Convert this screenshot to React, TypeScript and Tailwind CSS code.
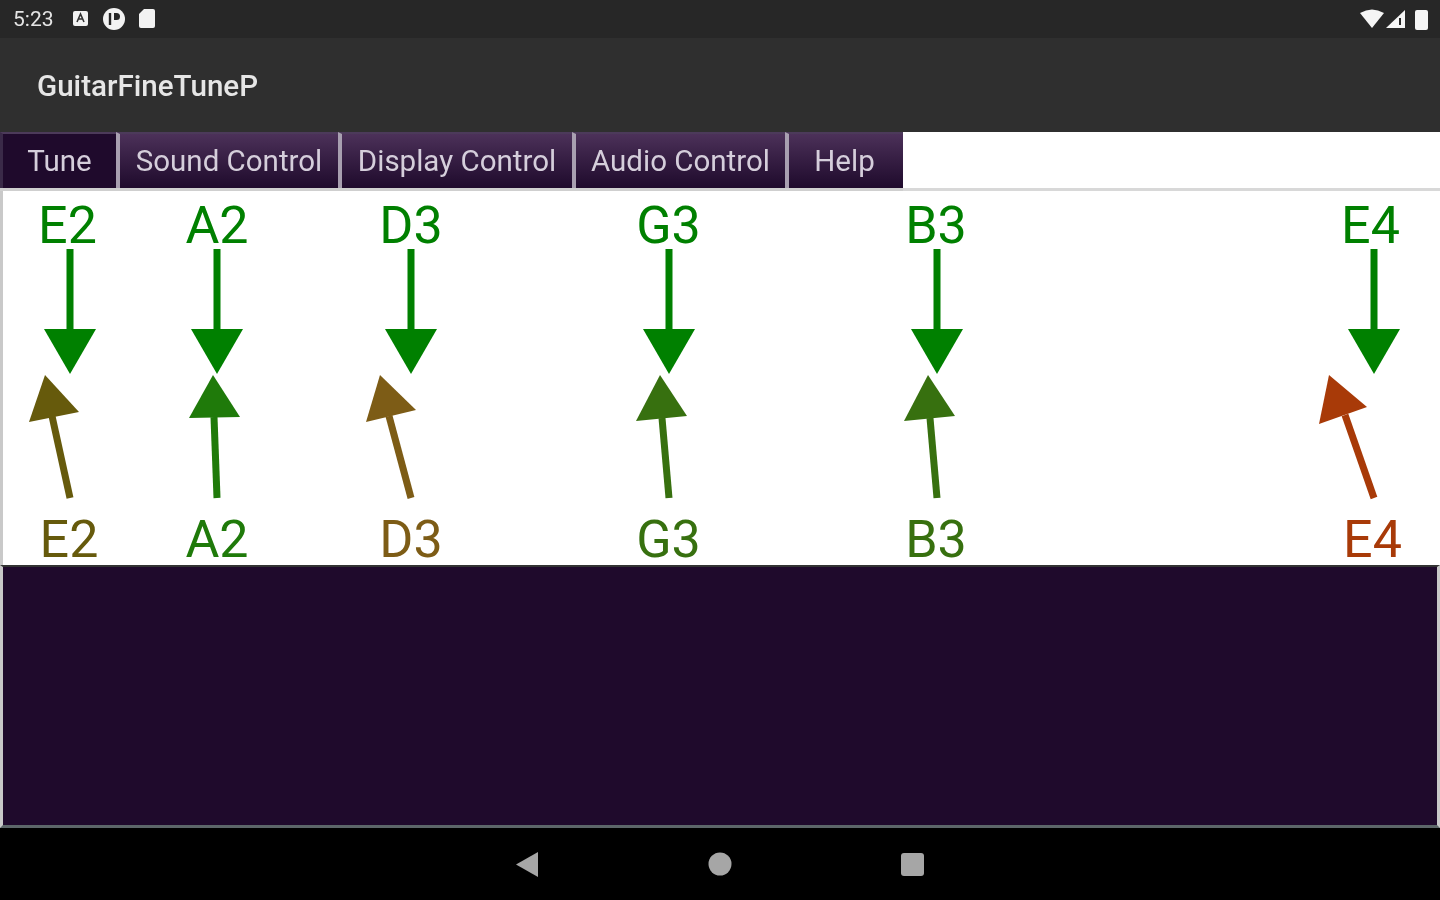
const roboto = "font-['Roboto',sans-serif]";

const tabs = [
  { label: "Tune", width: "w-[116px] border-l-[3px] border-l-[#3a2a48]", active: true },
  { label: "Sound Control", width: "w-[222px] border-l-[4px] border-l-[#a89fb0]", active: false },
  { label: "Display Control", width: "w-[234px] border-l-[4px] border-l-[#a89fb0]", active: false },
  { label: "Audio Control", width: "w-[213px] border-l-[4px] border-l-[#a89fb0]", active: false },
  { label: "Help", width: "w-[118px] border-l-[4px] border-l-[#a89fb0] pr-[3px]", active: false },
];

// x of each string on the tuner canvas, up arrow geometry read from the picture
const strings = [
  { top: "E2", bottom: "E2", x: 67.5, bottomX: 69, color: "#665a0c", tip: "45,375", left: "29,422", right: "79,412", foot: "70,498", neck: "52,416" },
  { top: "A2", bottom: "A2", x: 217, bottomX: 217, color: "#1f7a0a", tip: "213,375", left: "189,418", right: "240,417", foot: "217,498", neck: "214,417" },
  { top: "D3", bottom: "D3", x: 411, bottomX: 411, color: "#7d5c16", tip: "380,375", left: "366,422", right: "416,410", foot: "411,498", neck: "389,416" },
  { top: "G3", bottom: "G3", x: 668.5, bottomX: 668.5, color: "#37700f", tip: "660,375", left: "636,421", right: "687,416", foot: "669,498", neck: "662,418" },
  { top: "B3", bottom: "B3", x: 936, bottomX: 936, color: "#37700f", tip: "928,375", left: "904,421", right: "955,416", foot: "937,498", neck: "930,418" },
  { top: "E4", bottom: "E4", x: 1370.5, bottomX: 1372.5, color: "#a83a08", tip: "1329,375", left: "1319,424", right: "1367,407", foot: "1374,498", neck: "1345,415" },
];

const downX = [70, 217, 411, 669, 937, 1374];

function StatusBar() {
  return (
    <div className="flex h-[38px] shrink-0 items-center justify-between bg-[#272727] pl-[13px] pr-[11px]">
      <div className="flex items-center">
        <span className={`${roboto} w-[60px] pt-[2px] text-[21px] text-[#e4e4e4]`}>5:23</span>
        <svg width="90" height="24" viewBox="0 0 90 24">
          <rect x="0" y="4" width="15" height="15" rx="2" fill="#f2f2f2" />
          <path d="M4 15 L7.5 7 L11 15 M5.5 12 H9.5" stroke="#333" strokeWidth="1.6" fill="none" />
          <circle cx="41" cy="12" r="11" fill="#f2f2f2" />
          <path d="M37 6 V18" stroke="#262626" strokeWidth="2.4" />
          <path d="M41 6 H43.5 A3.5 3.5 0 0 1 43.5 13 H41 Z" fill="#262626" />
          <path d="M71 2 H80 A2 2 0 0 1 82 4 V19 A2 2 0 0 1 80 21 H68 A2 2 0 0 1 66 19 V7 Z" fill="#f2f2f2" />
        </svg>
      </div>
      <svg width="70" height="24" viewBox="0 0 70 24">
        <path d="M1 6 Q13 -1 25 6 L13 21 Z" fill="#f5f5f5" />
        <path d="M27 21 L46 3 V21 Z" fill="#f5f5f5" />
        <path d="M41 11 V18" stroke="#272727" strokeWidth="2" />
        <path d="M56 5 A2 2 0 0 1 58 3 H67 A2 2 0 0 1 69 5 V21 A2 2 0 0 1 67 23 H58 A2 2 0 0 1 56 21 Z" fill="#f5f5f5" />
      </svg>
    </div>
  );
}

function TabBar() {
  return (
    <div className="flex h-[59px] shrink-0 bg-white">
      <div className="flex h-full border-b-[3px] border-[#cfcfcf]">
        {tabs.map((tab) => (
          <div
            key={tab.label}
            className={`${roboto} ${tab.width} flex items-center justify-center border-t-[2px] border-t-[#4c3a5a] text-[29.5px] text-[#d5cedb] ${
              tab.active ? "bg-[#1f0a2c]" : "bg-gradient-to-b from-[#4c3159] to-[#1f0a2c]"
            }`}
          >
            {tab.label}
          </div>
        ))}
      </div>
      <div className="flex-1 border-b-[3px] border-[#d8d8d8]" />
    </div>
  );
}

function Tuner() {
  return (
    <div className="relative h-[374px] shrink-0 border-l-[3px] border-[#c9c9c9] bg-white">
      <svg className="absolute left-[-3px] top-[-191px]" width="1440" height="900" viewBox="0 0 1440 900">
        {downX.map((x) => (
          <g key={x} fill="#008000" stroke="none">
            <rect x={x - 3.5} y="249" width="7" height="82" />
            <path d={`M${x - 26} 329 H${x + 26} L${x} 374 Z`} />
          </g>
        ))}
        {strings.map((s) => (
          <g key={s.x}>
            <polyline points={`${s.foot} ${s.neck}`} stroke={s.color} strokeWidth="7" fill="none" />
            <polygon points={`${s.tip} ${s.left} ${s.right}`} fill={s.color} />
          </g>
        ))}
      </svg>
      {strings.map((s) => (
        <span
          key={s.x}
          className={`${roboto} absolute top-[5px] -translate-x-1/2 text-[52px] leading-[60px] text-[#008000]`}
          style={{ left: s.x - 3 }}
        >
          {s.top}
        </span>
      ))}
      {strings.map((s) => (
        <span
          key={s.x}
          className={`${roboto} absolute top-[319px] -translate-x-1/2 text-[52px] leading-[60px]`}
          style={{ left: s.bottomX - 3, color: s.color }}
        >
          {s.bottom}
        </span>
      ))}
    </div>
  );
}

function NavBar() {
  return (
    <div className="flex h-[72px] shrink-0 items-center justify-center bg-black">
      <svg width="440" height="72" viewBox="500 828 440 72">
        <path d="M538 852 V877 L516 864.5 Z" fill="#a6a6a6" />
        <circle cx="720" cy="864" r="11.5" fill="#a6a6a6" />
        <rect x="901" y="853" width="23" height="23" rx="3" fill="#a6a6a6" />
      </svg>
    </div>
  );
}

export default function App() {
  return (
    <div className="flex h-[900px] w-[1440px] flex-col overflow-hidden bg-black blur-[0.6px]">
      <StatusBar />
      <div className="flex h-[94px] shrink-0 items-center bg-[#2f2f2f] pl-[37px] pt-[2px]">
        <span className={`${roboto} text-[29.6px] font-medium text-[#e6e6e6]`}>GuitarFineTuneP</span>
      </div>
      <TabBar />
      <Tuner />
      <div className="h-[263px] shrink-0 border-x-[3px] border-b-[3px] border-t-[2px] border-x-[#c9c9c9] border-b-[#5c6669] border-t-[#333] bg-[#1f0a2c]" />
      <NavBar />
    </div>
  );
}
